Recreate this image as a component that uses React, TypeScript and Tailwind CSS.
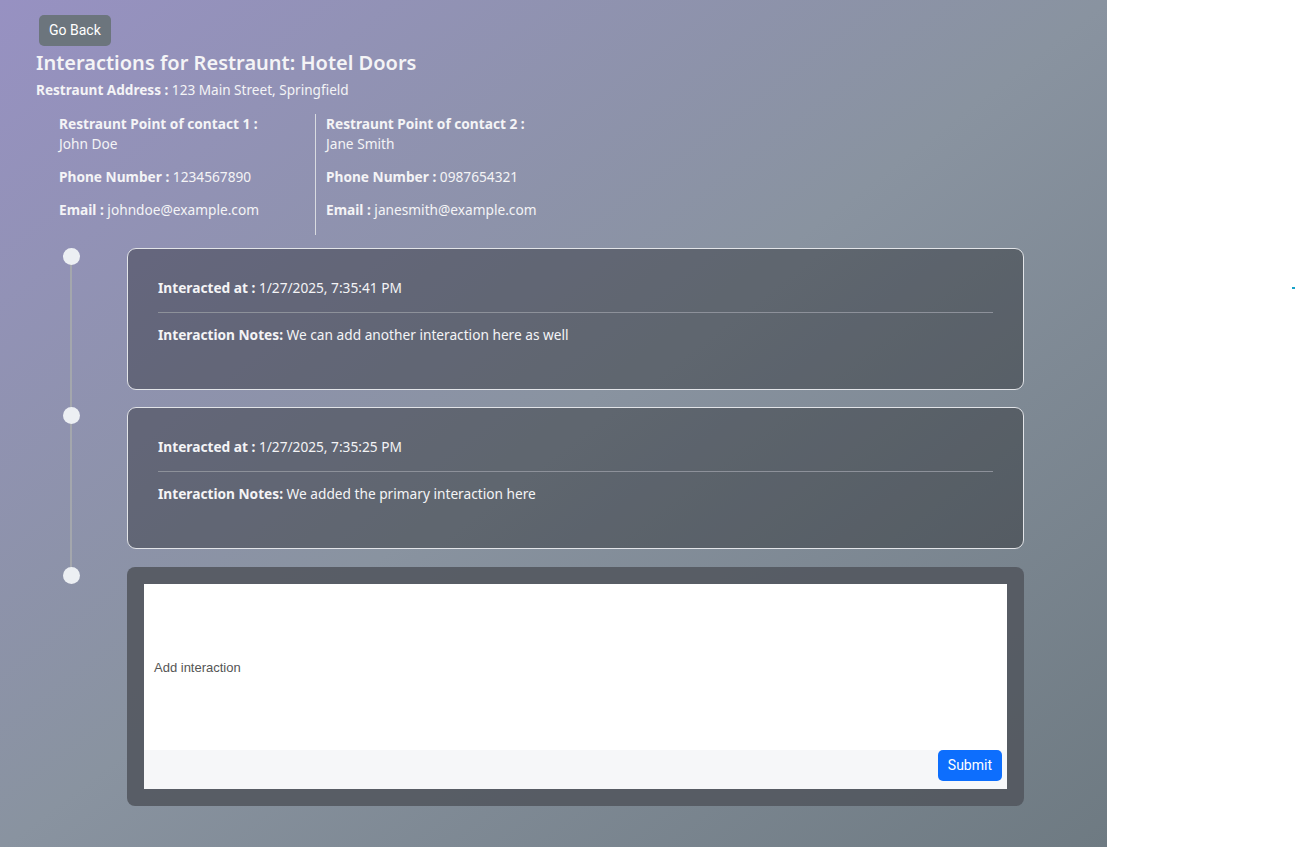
import React from 'react'

type Interaction = { at: string; notes: string }

const contacts = [
  { label: 'Restraunt Point of contact 1 :', name: 'John Doe', phone: '1234567890', email: 'johndoe@example.com' },
  { label: 'Restraunt Point of contact 2 :', name: 'Jane Smith', phone: '0987654321', email: 'janesmith@example.com' },
]

const interactions: Interaction[] = [
  { at: '1/27/2025, 7:35:41 PM', notes: 'We can add another interaction here as well' },
  { at: '1/27/2025, 7:35:25 PM', notes: 'We added the primary interaction here' },
]

const Dot = () => <div className="relative z-10 h-[17px] w-[17px] shrink-0 rounded-full bg-[#eceff3]" />

export default function App() {
  return (
    <div className="relative flex min-h-screen bg-white font-['Noto_Sans',sans-serif]">
      <div className="h-[847px] w-[1107px] bg-gradient-to-br from-[#9791c2] via-[#8993a0] to-[#6e7a82] pl-[36px] pt-[15px] text-[#f4f4f6]">
        <button className="ml-[3px] h-[31px] rounded-[5px] bg-[#6c757d] px-[10px] font-['Roboto',sans-serif] text-[14px] text-white">
          Go Back
        </button>
        <h2 className="mt-[3px] text-[20px] font-semibold leading-[28px]">Interactions for Restraunt: Hotel Doors</h2>
        <p className="mt-[3px] text-[13.6px] leading-[20px]">
          <span className="font-bold">Restraunt Address : </span>123 Main Street, Springfield
        </p>

        {/* contacts */}
        <div className="mt-[14px] flex text-[13.7px] leading-[20px]">
          {contacts.map((c, i) => (
            <div key={i} className={i === 0 ? 'w-[280px] border-r border-[#d9dbe0] pb-[15px] pl-[23px]' : 'pl-[10px]'}>
              <p className="font-bold">{c.label}</p>
              <p>{c.name}</p>
              <p className="mt-[13px]"><span className="font-bold">Phone Number : </span>{c.phone}</p>
              <p className="mt-[13px]"><span className="font-bold">Email : </span>{c.email}</p>
            </div>
          ))}
        </div>

        {/* timeline */}
        <div className="relative mt-[13px] flex w-[988px] flex-col gap-[17px] pl-[27px]">
          <div className="absolute left-[34px] top-[8px] h-[319px] w-[2px] bg-[#a4a7ad]" />
          {interactions.map((it, i) => (
            <div key={i} className="flex gap-[47px]">
              <Dot />
              <div className="h-[142px] flex-1 rounded-[9px] border border-[#e2e4e8] bg-black/30 px-[30px] pt-[29px] text-[13.7px] leading-[20px]">
                <p><span className="font-bold">Interacted at : </span>{it.at}</p>
                <hr className="mt-[14px] border-[#8d919a]" />
                <p className="mt-[12px]"><span className="font-bold">Interaction Notes:</span> {it.notes}</p>
              </div>
            </div>
          ))}
          <div className="mt-[1px] flex gap-[47px]">
            <Dot />
            <div className="flex-1 rounded-[8px] bg-[#53585f]/90 p-[17px]">
              <div className="flex h-[166px] items-center bg-white px-[10px] pt-[2px] font-['Liberation_Sans',Arial,sans-serif] text-[13px] text-[#555]">
                Add interaction
              </div>
              <div className="flex h-[39px] justify-end bg-[#f6f7f9] pr-[5px]">
                <button className="h-[31px] rounded-[5px] bg-[#0d6efd] px-[10px] font-['Roboto',sans-serif] text-[14px] text-white">
                  Submit
                </button>
              </div>
            </div>
          </div>
        </div>
      </div>
      <span className="absolute left-[1292px] top-[287px] h-[2px] w-[3px] bg-[#17a2c8]" />
    </div>
  )
}
